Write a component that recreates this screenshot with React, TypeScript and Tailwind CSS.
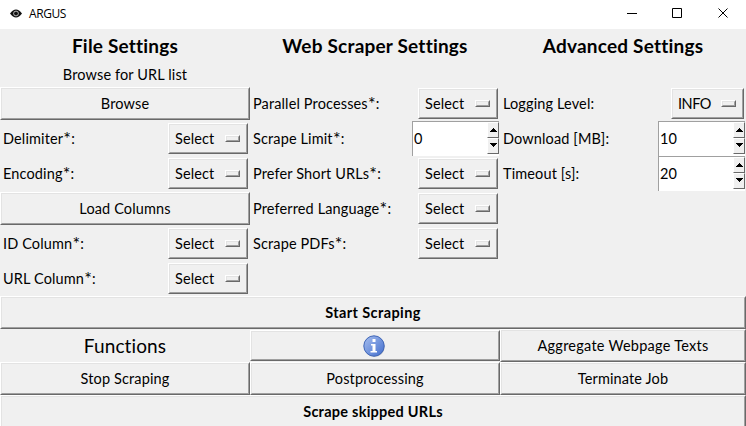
import type { ReactNode } from "react";

const raised =
  "border border-t-white border-l-white border-r-[#696969] border-b-[#696969]";
const inner =
  "border border-t-[#e3e3e3] border-l-[#e3e3e3] border-r-[#a0a0a0] border-b-[#a0a0a0]";

function Button({ children, className = "h-[33px]" }: { children: ReactNode; className?: string }) {
  return (
    <button className={`block w-full shrink-0 bg-[#f0f0f0] ${raised} ${className}`}>
      <span className={`flex h-full w-full items-center justify-center pt-[2px] ${inner}`}>{children}</span>
    </button>
  );
}

function Select({ value, className = "w-[80px] mr-[2px] tracking-[0.1px]" }: { value: string; className?: string }) {
  return (
    <button className={`h-[31px] shrink-0 ${raised} ${className}`}>
      <span className={`flex h-full w-full items-center justify-between pl-[5px] pr-[6px] ${inner}`}>
        <span className="pt-[2px]">{value}</span>
        <span className={`h-[7px] w-[15px] ${raised}`}>
          <span className={`block h-full w-full ${inner}`} />
        </span>
      </span>
    </button>
  );
}

function Arrow({ down = false }: { down?: boolean }) {
  return (
    <span className={`flex justify-center bg-[#f0f0f0] ${raised} h-[16px] w-[12px] ${down ? "pt-[4px]" : "pt-[5px]"}`}>
      <svg width="7" height="4" viewBox="0 0 7 4" shapeRendering="crispEdges">
        <path d={down ? "M0 0h7v1H6v1H5v1H4v1H3V3H2V2H1V1H0z" : "M0 4h7V3H6V2H5V1H4V0H3v1H2v1H1v1H0z"} />
      </svg>
    </span>
  );
}

function Spin({ value }: { value: string }) {
  return (
    <div className="mr-px flex h-[35px] w-[87px] shrink-0 items-center justify-between border-l border-t border-[#a0a0a0] bg-white">
      <span className="pl-[1px] pt-[1px] tracking-normal">{value}</span>
      <span className="flex h-full flex-col">
        <Arrow />
        <Arrow down />
      </span>
    </div>
  );
}

function Label({ text, required = false }: { text: string; required?: boolean }) {
  return (
    <span className="flex items-center pl-[3px] pt-[2px]">
      {text}
      {required && <span className="inline-block h-[14px] w-[8px] text-center text-[18px] leading-[11px] tracking-normal">*</span>}
      :
    </span>
  );
}

function Row({ label, required, children }: { label: string; required?: boolean; children: ReactNode }) {
  return (
    <div className="flex h-[35px] items-center justify-between">
      <Label text={label} required={required} />
      {children}
    </div>
  );
}

function FirstRow({ children }: { children: ReactNode }) {
  return <div className="mb-px flex h-[33px] items-center justify-between">{children}</div>;
}

function Heading({ children }: { children: ReactNode }) {
  return (
    <h2 className="flex h-[34px] items-center justify-center pb-[2px] text-[19px] font-bold tracking-[0.2px]">{children}</h2>
  );
}

export default function App() {
  return (
    <div className="h-[426px] w-[746px] overflow-hidden bg-[#f0f0f0] font-['Lato',sans-serif] text-[14.5px] leading-none tracking-[0.13px] whitespace-nowrap text-black [font-variant-ligatures:none]">
      <header className="flex h-[29px] items-center bg-white">
        <svg className="ml-[10px] mb-[2px]" width="12" height="9" viewBox="0 0 12 9">
          <path d="M0 4.5Q6-3.5 12 4.5Q6 12.5 0 4.5Z" fill="#111" />
          <circle cx="6" cy="4.5" r="2.4" fill="none" stroke="#ddd" strokeWidth=".8" />
        </svg>
        <span className="ml-[7px] mb-[2px] font-['Open_Sans',sans-serif] text-[12px] tracking-[-0.4px]">ARGUS</span>
        <svg className="ml-auto" width="119" height="29" viewBox="0 0 119 29" fill="none" stroke="#000">
          <path d="M0 13.5h10M45.5 8.5h9v9h-9zM91.500 8.500l9 9M100.500 8.500l-9 9" />
        </svg>
      </header>

      <main className="grid h-[267px] grid-cols-[250px_250px_246px]">
        <section>
          <Heading>File Settings</Heading>
          <div className="flex h-[24px] items-center justify-center">Browse for URL list</div>
          <FirstRow><Button>Browse</Button></FirstRow>
          <Row label="Delimiter" required><Select value="Select" /></Row>
          <Row label="Encoding" required><Select value="Select" /></Row>
          <div className="flex h-[35px] items-center"><Button>Load Columns</Button></div>
          <Row label="ID Column" required><Select value="Select" /></Row>
          <Row label="URL Column" required><Select value="Select" /></Row>
        </section>
        <section>
          <Heading>Web Scraper Settings</Heading>
          <div className="h-[24px]" />
          <FirstRow><Label text="Parallel Processes" required /><Select value="Select" /></FirstRow>
          <Row label="Scrape Limit" required><Spin value="0" /></Row>
          <Row label="Prefer Short URLs" required><Select value="Select" /></Row>
          <Row label="Preferred Language" required><Select value="Select" /></Row>
          <Row label="Scrape PDFs" required><Select value="Select" /></Row>
        </section>
        <section>
          <Heading>Advanced Settings</Heading>
          <div className="h-[24px]" />
          <FirstRow><Label text="Logging Level" /><Select value="INFO" className="mr-[2px] w-[73px] tracking-[-0.5px]" /></FirstRow>
          <Row label="Download [MB]"><Spin value="10" /></Row>
          <Row label="Timeout [s]"><Spin value="20" /></Row>
        </section>
      </main>

      <Button><b className="tracking-[0.4px]">Start Scraping</b></Button>
      <div className="grid h-[66px] grid-cols-[250px_250px_246px] grid-rows-[33px_33px]">
        <div className="flex items-center justify-center text-[19px]">Functions</div>
        <div className="flex items-center">
          <Button className="h-[31px]">
            <svg className="mr-[2px] mb-[2px]" width="22" height="22" viewBox="0 0 22 22">
              <defs>
                <linearGradient id="info" x1="0" y1="0" x2="1" y2="1">
                  <stop offset="0" stopColor="#a9c0ef" />
                  <stop offset="1" stopColor="#416dcd" />
                </linearGradient>
              </defs>
              <circle cx="11.5" cy="11.7" r="10.2" fill="#b8bcc6" />
              <circle cx="11" cy="11" r="10.2" fill="url(#info)" stroke="#3e65b7" />
              <path d="M9.5 4h3v3h-3zM8 9h4.500v7H14v1.500H7.500V16h2v-5.500H8z" fill="white" />
            </svg>
          </Button>
        </div>
        <Button><span className="tracking-[0.25px]">Aggregate Webpage Texts</span></Button>
        <Button>Stop Scraping</Button>
        <Button>Postprocessing</Button>
        <Button>Terminate Job</Button>
      </div>
      <Button><b className="tracking-[0.25px]">Scrape skipped URLs</b></Button>
    </div>
  );
}
